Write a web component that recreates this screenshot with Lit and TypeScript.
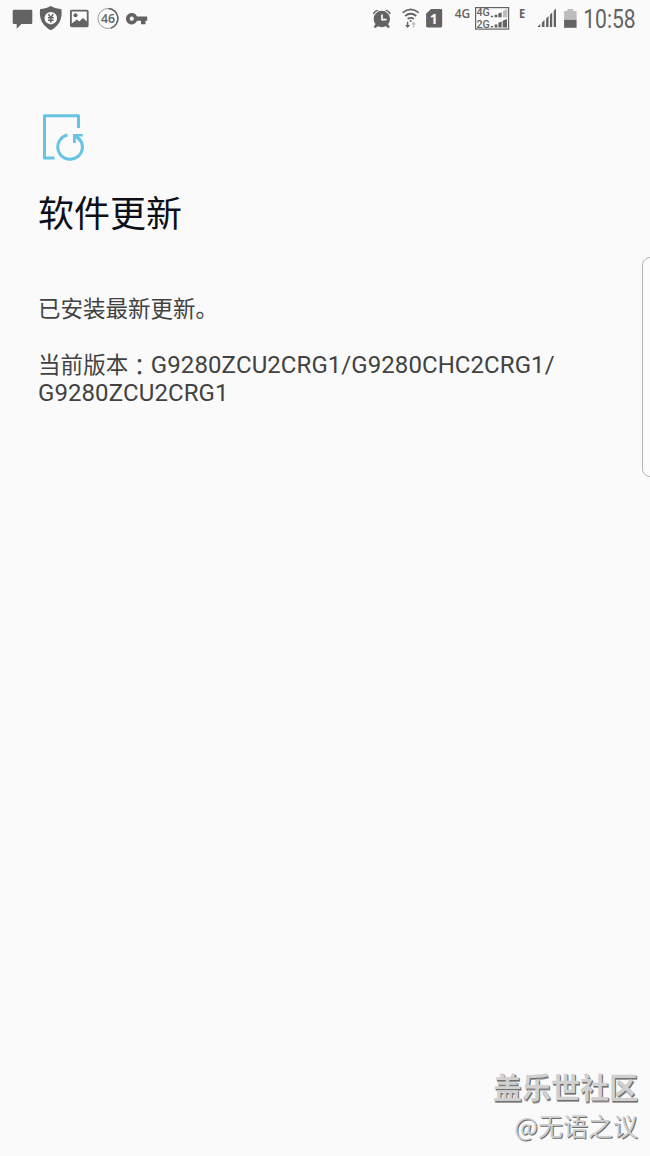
import { LitElement, html, svg, css } from "lit";
import { customElement } from "lit/decorators.js";

@customElement("status-bar")
class StatusBar extends LitElement {
  static styles = css`
    :host { display: flex; justify-content: space-between; height: 40px; }
    .group { display: flex; }
    svg { display: block; fill: #636363; font-family: "Open Sans", "Noto Sans", sans-serif; font-weight: 700; }
    .line { fill: none; stroke: #636363; }
    .paper { fill: #fafafa; }
    .cut { fill: none; stroke: #fafafa; }
    .faint { fill: #bdbdbd; }
    .semi { font-weight: 600; }
    .tiny { font-family: Roboto, sans-serif; font-weight: 500; font-size: 10px; }
    .clock { font-family: Roboto, sans-serif; font-weight: 400; }
  `;

  /* Every icon is a slice of the bar, drawn in the bar's own coordinates. */
  private slice(x: number, width: number, art: unknown) {
    return html`<svg width=${width} height="40" viewBox="${x} 0 ${width} 40">${art}</svg>`;
  }

  render() {
    return html`
      <div class="group">
        ${this.slice(0, 36, svg`<path d="M14 9.700H31Q32.300 9.700 32.300 11V22.700Q32.300 24 31 24H21.500L16.700 28.700V24H14Q12.700 24 12.700 22.700V11Q12.700 9.700 14 9.700Z"/>`)}
        ${this.slice(36, 30, svg`
          <path d="M50.800 6Q55 8.800 61.400 9.200Q63.300 23.500 50.800 30.300Q38.200 23.500 40.100 9.200Q46.600 8.800 50.800 6Z"/>
          <circle class="paper" cx="50.800" cy="18.200" r="6.200"/>
          <path class="line" stroke-width="1.400" d="M48.300 14.200L50.800 17.400L53.300 14.200M50.800 17.200V22.700M48 17.700H53.600M48 20.200H53.600"/>`)}
        ${this.slice(66, 26, svg`
          <path fill-rule="evenodd" d="M71.500 9.700H87Q88.600 9.700 88.600 11.300V25.600Q88.600 27.200 87 27.200H71.500Q70 27.200 70 25.600V11.300Q70 9.700 71.500 9.700ZM71.800 11.500V23.500L77 19.500L79.200 21.500L83 18L86.800 21.500V11.500Z"/>
          <circle cx="75.500" cy="15.200" r="2"/>`)}
        ${this.slice(92, 30, svg`
          <circle class="line" cx="108" cy="18.500" r="10" stroke-width=".6"/>
          <path class="line" stroke-width="1.500" d="M108.500 8.500A10 10 0 0 1 111 28"/>
          <text class="semi" x="101" y="23.300" font-size="13" textLength="14" lengthAdjust="spacingAndGlyphs">46</text>`)}
        ${this.slice(122, 30, svg`
          <path fill-rule="evenodd" d="M131.800 13.100A5.700 5.700 0 0 1 137 16.500H147.200V20.700H145.500V24.200H141V20.700H137A5.700 5.700 0 1 1 131.800 13.100ZM131.800 16.600A2.100 2.100 0 1 0 131.800 20.800A2.100 2.100 0 1 0 131.800 16.600Z"/>`)}
      </div>
      <div class="group">
        ${this.slice(368, 28, svg`
          <circle cx="381.800" cy="19" r="8.200"/>
          <path d="M372.800 13.300Q374 10.300 377.500 9.700L378.500 10.600Q375.300 11.700 373.800 14.600ZM390.800 13.300Q389.600 10.300 386.100 9.700L385.100 10.600Q388.300 11.700 389.800 14.600ZM376 23.500L373.500 27L375.600 28L378.700 25.500ZM387.600 23.500L390 27L388 28L385 25.500Z"/>
          <path class="cut" stroke-width="1.700" d="M382 14.500V19.700H386.600"/>`)}
        ${this.slice(396, 26, svg`
          <g class="line" stroke-width="1.700">
            <path d="M402.700 12.700Q410.700 6.100 418.700 12.700M405.100 16Q410.700 11.500 416.300 16M407.600 19Q410.700 16.700 413.800 19"/>
          </g>
          <circle cx="410.700" cy="21" r="1"/>
          <path d="M406.900 21.800H408.300V25H410.100L407.600 28L405.100 25H406.900Z"/>
          <path class="faint" d="M412.900 27.500H414.300V24.500H416L413.600 21.600L411.200 24.500H412.900Z"/>`)}
        ${this.slice(422, 28, svg`
          <path d="M431 9H440.800Q442.200 9 442.200 10.400V26Q442.200 27.400 440.800 27.400H427.500Q426.100 27.400 426.100 26V13.700Z"/>
          <text class="paper" x="429.800" y="23.500" font-size="14">1</text>`)}
        ${this.slice(450, 64, svg`
          <text class="semi" x="454.800" y="17.700" font-size="12" textLength="15.500" lengthAdjust="spacingAndGlyphs">4G</text>
          <rect class="line" x="475.600" y="7.600" width="33" height="21.500" stroke-width="1.200"/>
          <text class="tiny" x="476.400" y="16.300" textLength="13.300" lengthAdjust="spacingAndGlyphs">4G</text>
          <text class="tiny" x="476.400" y="28.200" textLength="13.300" lengthAdjust="spacingAndGlyphs">2G</text>
          <path d="M490.800 15.700H493V17.300H490.800ZM494.600 14.700H497.400V17.300H494.600ZM498.400 13.200L501.700 12.400V17.300H498.400Z"/>
          <path class="faint" d="M503 11.200L507.300 8.800V17.300H503Z"/>
          <path d="M490.800 26H493V27.500H490.800ZM494.600 24.500H497.400V27.500H494.600ZM498.400 22.800L501.700 21.500V27.500H498.400ZM502.700 20.800L507 18.900V27.500H502.700Z"/>`)}
        ${this.slice(514, 46, svg`
          <text x="518.900" y="17.500" font-size="11.500" textLength="6.200" lengthAdjust="spacingAndGlyphs">E</text>
          <path d="M537.200 27L540.300 23.900V27ZM541.900 22.500L544.500 19.900V27H541.900ZM546.100 18.500L548.500 16.100V27H546.100ZM549.900 14.700L552.200 12.400V27H549.900ZM553.700 10.900L556 8.400V27H553.700Z"/>`)}
        ${this.slice(560, 22, svg`
          <path class="faint" d="M567.500 9H573.200V11H576.600V20H564.100V11H567.500Z"/>
          <path d="M564.100 19.900H576.600V27.800H564.100Z"/>`)}
        ${this.slice(582, 68, svg`<text class="clock" x="583.200" y="27.700" font-size="25" textLength="52.500" lengthAdjust="spacingAndGlyphs">10:58</text>`)}
      </div>`;
  }
}

@customElement("app-root")
class AppRoot extends LitElement {
  static styles = css`
    :host {
      position: relative; display: flex; flex-direction: column; box-sizing: border-box;
      width: 650px; height: 1156px; overflow: hidden; background: #fafafa; color: #424242;
      font-family: Roboto, "Noto Sans CJK SC", sans-serif;
    }
    main { flex: 1; padding: 70px 38px 0; }
    .update-icon { display: block; width: 52px; height: 56px; fill: none; stroke: #67c3e4; stroke-width: 3; }
    .arrow { fill: #67c3e4; stroke: none; }
    h1 { margin: 22px 0 0; font-size: 36px; line-height: 54px; font-weight: 400; color: #0c0f1a; }
    p { margin: 0; font-size: 24px; line-height: 28px; white-space: nowrap; font-kerning: none; }
    .state { margin-top: 53px; }
    .version { margin-top: 28px; letter-spacing: .07px; }
    .han { font-size: 22.500px; }
    .colon { font-family: "Noto Sans CJK TC", sans-serif; line-height: 0; vertical-align: -2px; }
    footer { display: flex; flex-direction: column; align-items: flex-end; padding-right: 12px; height: 91px; font-family: "Noto Sans CJK SC", sans-serif; }
    .brand { font-size: 29px; line-height: 42px; font-weight: 700; color: #d0d0d0; text-shadow: 1px 1px 0 #707070, 1px 2px 0 #a0a0a0; }
    .author { font-size: 25px; line-height: 36px; color: #cfcfcf; text-shadow: 1px 1px 0 #6c6c6c; }
    .edge { position: absolute; left: 642px; top: 257px; width: 16px; height: 218px; border: 1px solid #b5b5b5; border-radius: 8px; background: #fcfcfc; }
  `;

  render() {
    return html`
      <status-bar></status-bar>
      <main>
        <svg class="update-icon" viewBox="38 110 52 56">
          <path stroke-linejoin="round" d="M54.500 158H44.500V115.700H78.500V128"/>
          <path d="M67.500 135A12.300 12.300 0 1 0 77.500 137.200"/>
          <path class="arrow" d="M73 134H82.700V136.500H78.500L81.500 140L79.500 142L75.800 138.200V143H73Z"/>
        </svg>
        <h1>软件更新</h1>
        <p class="state"><span class="han">已安装最新更新。</span></p>
        <p class="version"><span class="han">当前版本<span class="colon" lang="zh-TW">：</span></span>G9280ZCU2CRG1/G9280CHC2CRG1/<br>G9280ZCU2CRG1</p>
      </main>
      <footer>
        <div class="brand">盖乐世社区</div>
        <div class="author">@无语之议</div>
      </footer>
      <div class="edge"></div>`;
  }
}
